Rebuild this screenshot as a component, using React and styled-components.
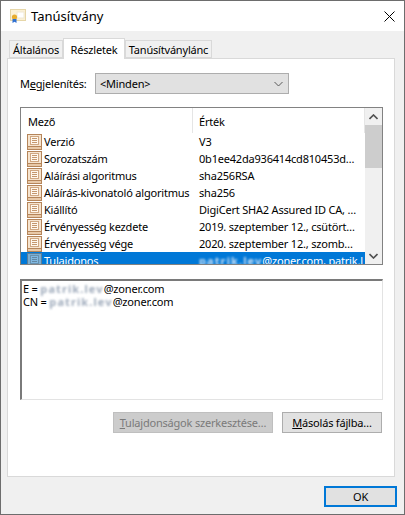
import styled, { createGlobalStyle } from 'styled-components';

const fields = [
    { name: 'Verzió', value: 'V3' },
    { name: 'Sorozatszám', value: '0b1ee42da936414cd810453d…' },
    { name: 'Aláírási algoritmus', value: 'sha256RSA' },
    { name: 'Aláírás-kivonatoló algoritmus', value: 'sha256' },
    { name: 'Kiállító', value: 'DigiCert SHA2 Assured ID CA, …' },
    { name: 'Érvényesség kezdete', value: '2019. szeptember 12., csütört…' },
    { name: 'Érvényesség vége', value: '2020. szeptember 12., szomb…' },
];

const GlobalStyle = createGlobalStyle`
    html, body {
        margin: 0;
        padding: 0;
        background: #f0f0f0;
    }
    * {
        box-sizing: border-box;
    }
`;

const Window = styled.div`
    width: 405px;
    height: 515px;
    display: flex;
    flex-direction: column;
    border: 1px solid #6d6d6d;
    background: #f0f0f0;
    font-family: 'Noto Sans', sans-serif;
    font-size: 11px;
    letter-spacing: -0.2px;
    color: #000;
    overflow: hidden;
`;

const TitleBar = styled.div`
    height: 30px;
    flex: none;
    display: flex;
    align-items: center;
    padding: 0 9px 0 9px;
    gap: 5px;
    background: #fff;
    font-size: 13px;
    letter-spacing: 0;
`;

const Title = styled.span`
    flex: 1;
`;

const Body = styled.div`
    flex: 1;
    display: flex;
    flex-direction: column;
    padding: 7px 7px 7px 6px;
`;

const TabRow = styled.div`
    height: 20px;
    flex: none;
    display: flex;
    align-items: flex-end;
    padding-left: 2px;
`;

const Tab = styled.div`
    width: ${p => p.$width}px;
    height: ${p => (p.$active ? '21px' : '18px')};
    margin-bottom: ${p => (p.$active ? '-1px' : '0')};
    display: flex;
    align-items: center;
    justify-content: center;
    border: 1px solid #d9d9d9;
    border-bottom: ${p => (p.$active ? 'none' : '1px solid #d9d9d9')};
    background: ${p => (p.$active ? '#fff' : '#f0f0f0')};
    position: relative;
    z-index: ${p => (p.$active ? 1 : 0)};
`;

const Panel = styled.div`
    width: 388px;
    height: 419px;
    flex: none;
    display: flex;
    flex-direction: column;
    padding: 14px 11px 0 12px;
    background: #fff;
    border: 1px solid #d9d9d9;
`;

const ShowRow = styled.div`
    display: flex;
    align-items: center;
    height: 21px;
`;

const Label = styled.span`
    width: 75px;
    flex: none;
`;

const Select = styled.div`
    width: 194px;
    height: 21px;
    display: flex;
    align-items: center;
    justify-content: space-between;
    padding: 0 5px 0 4px;
    background: #e1e1e1;
    border: 1px solid #adadad;
`;

const Chevron = styled.svg`
    width: 9px;
    height: 6px;
    fill: none;
    stroke: #5a5a5a;
    stroke-width: 1;
`;

const ListBox = styled.div`
    height: 158px;
    margin-top: 13px;
    display: flex;
    border: 1px solid #828282;
    background: #fff;
    overflow: hidden;
`;

const ListMain = styled.div`
    flex: 1;
    min-width: 0;
    overflow: hidden;
`;

const HeaderRow = styled.div`
    height: 25px;
    display: grid;
    grid-template-columns: 172px 1fr;
    align-items: center;
`;

const HeaderCell = styled.div`
    height: 100%;
    display: flex;
    align-items: center;
    padding: 2px 0 0 ${p => p.$indent}px;
    border-right: 1px solid #e5e5e5;
`;

const FieldRow = styled.div`
    height: 17px;
    display: grid;
    grid-template-columns: 172px 1fr;
    align-items: center;
    background: ${p => (p.$selected ? '#0078d7' : 'transparent')};
    color: ${p => (p.$selected ? '#fff' : '#000')};
`;

const FieldName = styled.div`
    display: flex;
    align-items: center;
    gap: 2px;
    padding-left: 6px;
    white-space: nowrap;
`;

const FieldIcon = styled.svg`
    width: 15px;
    height: 16px;
    flex: none;
    opacity: ${p => (p.$selected ? 0.5 : 1)};
`;

const FieldValue = styled.div`
    padding-left: 6px;
    white-space: nowrap;
    overflow: hidden;
`;

const Redacted = styled.span`
    filter: blur(1.3px);
    font-weight: 700;
    letter-spacing: 1.1px;
    opacity: ${p => (p.$light ? 0.9 : 0.75)};
    color: ${p => (p.$light ? '#dce9f8' : '#8090a6')};
`;

const ScrollBar = styled.div`
    width: 17px;
    flex: none;
    display: flex;
    flex-direction: column;
    background: #f0f0f0;
`;

const ScrollButton = styled.div`
    height: 17px;
    flex: none;
    display: flex;
    align-items: center;
    justify-content: center;
`;

const ScrollThumb = styled.div`
    height: 43px;
    flex: none;
    background: #cdcdcd;
`;

const ScrollTrack = styled.div`
    flex: 1;
`;

const ArrowIcon = styled.svg`
    width: 9px;
    height: 6px;
    fill: none;
    stroke: #505050;
    stroke-width: 1.6;
`;

const DetailBox = styled.div`
    height: 121px;
    margin-top: 14px;
    padding: 1px 0 0 1px;
    border-style: solid;
    border-width: 2px 1px 1px 2px;
    border-color: #7a7a7a #e3e3e3 #e3e3e3 #7a7a7a;
    background: #fff;
    line-height: 13px;
`;

const ButtonRow = styled.div`
    display: flex;
    justify-content: flex-end;
    gap: 9px;
    margin-top: 12px;
    padding-right: 1px;
`;

const Button = styled.div`
    width: ${p => p.$width}px;
    height: 21px;
    display: flex;
    align-items: center;
    justify-content: center;
    white-space: nowrap;
    background: ${p => (p.$disabled ? '#cccccc' : '#e1e1e1')};
    border: 1px solid ${p => (p.$disabled ? '#bfbfbf' : '#adadad')};
    color: ${p => (p.$disabled ? '#7a7a7a' : '#000')};
`;

const Footer = styled.div`
    display: flex;
    justify-content: flex-end;
    margin-top: 9px;
`;

const OkButton = styled.div`
    width: 73px;
    height: 21px;
    display: flex;
    align-items: center;
    justify-content: center;
    background: #e1e1e1;
    border: 2px solid #0078d7;
`;

const Underline = styled.span`
    text-decoration: underline;
`;

const CloseIcon = styled.svg`
    width: 11px;
    height: 11px;
    stroke: #000;
    stroke-width: 1;
`;

const CertIcon = () => (
    <svg width="16" height="16" viewBox="0 0 16 16">
        <rect x="0.5" y="1.5" width="15" height="11" fill="#fbf1d6" stroke="#e6d6a8" />
        <rect x="7" y="4" width="7" height="6" fill="#fff" stroke="#efe8d4" />
        <circle cx="4.5" cy="9" r="2.6" fill="#e8ad2e" />
        <path d="M2.5 11 L2.5 15 L4.5 13.8 L6.5 15 L6.5 11 Z" fill="#2f6fd0" />
    </svg>
);

const RowIcon = ({ selected }) => (
    <FieldIcon $selected={selected} viewBox="0 0 15 16">
        <rect x="0.5" y="0.5" width="14" height="12" fill="#f6e4cf" stroke="#b5855a" />
        <rect x="3.5" y="2.5" width="8" height="8" fill="#fff8ee" stroke="#d0a883" />
        <path d="M5 4.5 H10 M5 6.5 H10 M5 8.5 H10" stroke="#c4976e" />
        <rect x="0.5" y="12.5" width="14" height="3" fill="#e8c9a8" stroke="#b5855a" />
    </FieldIcon>
);

export default function App() {
    return (
        <Window>
            <GlobalStyle />
            <TitleBar>
                <CertIcon />
                <Title>Tanúsítvány</Title>
                <CloseIcon viewBox="0 0 11 11">
                    <path d="M0.5 0.5 L10.5 10.5 M10.5 0.5 L0.5 10.5" />
                </CloseIcon>
            </TitleBar>
            <Body>
                <TabRow>
                    <Tab $width={54}>Általános</Tab>
                    <Tab $active $width={62}>
                        Részletek
                    </Tab>
                    <Tab $width={87}>Tanúsítványlánc</Tab>
                </TabRow>
                <Panel>
                    <ShowRow>
                        <Label>
                            M<Underline>e</Underline>gjelenítés:
                        </Label>
                        <Select>
                            &lt;Minden&gt;
                            <Chevron viewBox="0 0 9 6">
                                <path d="M0.5 1 L4.5 5 L8.5 1" />
                            </Chevron>
                        </Select>
                    </ShowRow>
                    <ListBox>
                        <ListMain>
                            <HeaderRow>
                                <HeaderCell $indent={7}>Mező</HeaderCell>
                                <HeaderCell $indent={6}>Érték</HeaderCell>
                            </HeaderRow>
                            {fields.map(field => (
                                <FieldRow key={field.name}>
                                    <FieldName>
                                        <RowIcon />
                                        {field.name}
                                    </FieldName>
                                    <FieldValue>{field.value}</FieldValue>
                                </FieldRow>
                            ))}
                            <FieldRow $selected>
                                <FieldName>
                                    <RowIcon selected />
                                    Tulajdonos
                                </FieldName>
                                <FieldValue>
                                    <Redacted $light>patrik.lev</Redacted>
                                    @zoner.com, patrik.l
                                </FieldValue>
                            </FieldRow>
                        </ListMain>
                        <ScrollBar>
                            <ScrollButton>
                                <ArrowIcon viewBox="0 0 9 6">
                                    <path d="M0.5 5 L4.5 1 L8.5 5" />
                                </ArrowIcon>
                            </ScrollButton>
                            <ScrollThumb />
                            <ScrollTrack />
                            <ScrollButton>
                                <ArrowIcon viewBox="0 0 9 6">
                                    <path d="M0.5 1 L4.5 5 L8.5 1" />
                                </ArrowIcon>
                            </ScrollButton>
                        </ScrollBar>
                    </ListBox>
                    <DetailBox>
                        <div>
                            E = <Redacted>patrik.lev</Redacted>@zoner.com
                        </div>
                        <div>
                            CN = <Redacted>patrik.lev</Redacted>@zoner.com
                        </div>
                    </DetailBox>
                    <ButtonRow>
                        <Button $disabled $width={160}>
                            <span>
                                <Underline>T</Underline>ulajdonságok szerkesztése…
                            </span>
                        </Button>
                        <Button $width={100}>
                            <span>
                                <Underline>M</Underline>ásolás fájlba…
                            </span>
                        </Button>
                    </ButtonRow>
                </Panel>
                <Footer>
                    <OkButton>OK</OkButton>
                </Footer>
            </Body>
        </Window>
    );
}
